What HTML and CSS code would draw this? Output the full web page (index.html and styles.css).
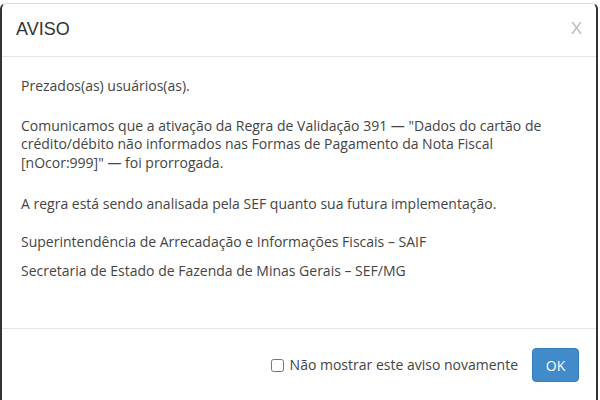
FILE: index.html
```html
<!DOCTYPE html>
<html lang="pt-BR">
<head>
    <meta charset="UTF-8">
    <meta name="viewport" content="width=device-width,initial-scale=1.0">
    <title>Aviso</title>
    <link rel="stylesheet" href="styles.css">
</head>
<body>
<div class="modal">
    <div class="modal-header">
        <h4 class="modal-title">AVISO</h4>
        <button class="close" type="button">X</button>
    </div>
    <div class="modal-body">
        <p class="p1">Prezados(as) usuários(as).</p>
        <p class="p2">Comunicamos que a ativação da Regra de Validação 391 — "Dados do cartão de crédito/débito não informados nas Formas de Pagamento da Nota Fiscal [nOcor:999]" — foi prorrogada.</p>
        <p class="p3">A regra está sendo analisada pela SEF quanto sua futura implementação.</p>
        <p class="p4">Superintendência de Arrecadação e Informações Fiscais – SAIF</p>
        <p class="p5">Secretaria de Estado de Fazenda de Minas Gerais – SEF/MG</p>
    </div>
    <div class="modal-footer">
        <label class="check"><input type="checkbox"> Não mostrar este aviso novamente</label>
        <button class="btn-ok" type="button">OK</button>
    </div>
</div>
</body>
</html>
```

FILE: styles.css
```css
* {
    box-sizing: border-box;
}

html, body {
    height: 100%;
    overflow: hidden;
}

body {
    margin: 0;
    background: #fff;
    font-family: "Open Sans", "Liberation Sans", Arial, sans-serif;
    font-size: 14px;
    line-height: 18.5px;
    color: #333;
}

.modal {
    margin-top: 3px;
    width: 598px;
    height: 397px;
    background: #fff;
    border: 1px solid #ddd;
    border-bottom: 0;
    border-left: 2px solid #333;
    border-right: 2px solid #333;
    border-radius: 6px 6px 0 0;
}

.modal-header {
    display: flex;
    align-items: center;
    justify-content: space-between;
    padding: 12px 14px 14px 14px;
    border-bottom: 1px solid #e5e5e5;
}

.modal-title {
    margin: 0;
    font-family: "Liberation Sans", Arial, sans-serif;
    font-size: 18px;
    font-weight: normal;
    line-height: 26px;
    color: #333;
}

.close {
    background: none;
    border: 0;
    padding: 0;
    font-family: "Liberation Sans", Arial, sans-serif;
    font-size: 17px;
    color: #bbb;
    cursor: pointer;
}

.modal-body {
    height: 271px;
    padding: 20px 40px 20px 19px;
    color: #444;
}

.modal-body p {
    margin: 0;
}

.modal-body .p2 {
    margin-top: 21px;
}

.modal-body .p3 {
    margin-top: 23px;
}

.modal-body .p4 {
    margin-top: 19px;
}

.modal-body .p5 {
    margin-top: 11px;
}

.modal-footer {
    display: flex;
    align-items: center;
    justify-content: flex-end;
    gap: 14px;
    padding: 19px 17px;
    border-top: 1px solid #e5e5e5;
}

.check {
    display: flex;
    align-items: center;
    gap: 6px;
    font-size: 14px;
    color: #444;
}

.check input {
    margin: 0;
    width: 13px;
    height: 13px;
}

.btn-ok {
    width: 47px;
    height: 34px;
    background: #428bca;
    border: 1px solid #357ebd;
    border-radius: 4px;
    color: #fff;
    font-family: "Open Sans", Arial, sans-serif;
    font-size: 14px;
    cursor: pointer;
}
```
